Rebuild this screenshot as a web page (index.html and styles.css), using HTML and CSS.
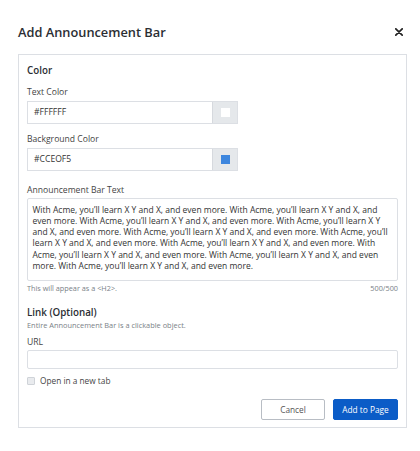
FILE: index.html
```html
<!DOCTYPE html>
<html lang="en">
<head>
<meta charset="utf-8">
<title>Add Announcement Bar</title>
<link rel="stylesheet" href="styles.css">
</head>
<body>
<div class="modal">
  <header class="modal-header">
    <h1 class="modal-title">Add Announcement Bar</h1>
    <button class="close" aria-label="Close">
      <svg width="8" height="8" viewBox="0 0 8 8"><path d="M0.8 0.8 L7.2 7.2 M7.2 0.8 L0.8 7.2" stroke="#222" stroke-width="1.7" stroke-linecap="round"/></svg>
    </button>
  </header>
  <section class="panel">
    <h2 class="section-title">Color</h2>
    <label class="label label-first">Text Color</label>
    <div class="color-input">
      <span class="color-value">#FFFFFF</span>
      <span class="swatch-box"><span class="swatch swatch-white"></span></span>
    </div>
    <label class="label">Background Color</label>
    <div class="color-input">
      <span class="color-value">#CCEOF5</span>
      <span class="swatch-box"><span class="swatch swatch-blue"></span></span>
    </div>
    <label class="label label-text">Announcement Bar Text</label>
    <div class="textarea">With Acme, you’ll learn X Y and X, and even more. With Acme, you’ll learn X Y and X, and even more. With Acme, you’ll learn X Y and X, and even more. With Acme, you’ll learn X Y and X, and even more. With Acme, you’ll learn X Y and X, and even more. With Acme, you’ll learn X Y and X, and even more. With Acme, you’ll learn X Y and X, and even more. With Acme, you’ll learn X Y and X, and even more. With Acme, you’ll learn X Y and X, and even more. With Acme, you’ll learn X Y and X, and even more.</div>
    <div class="hint-row">
      <span>This will appear as a &lt;H2&gt;.</span>
      <span>500/500</span>
    </div>
    <h2 class="section-title link-title">Link (Optional)</h2>
    <p class="sub">Entire Announcement Bar is a clickable object.</p>
    <label class="label label-url">URL</label>
    <div class="url-input"></div>
    <div class="check-row">
      <span class="checkbox"></span>
      <span>Open in a new tab</span>
    </div>
    <div class="actions">
      <button class="btn btn-cancel">Cancel</button>
      <button class="btn btn-primary">Add to Page</button>
    </div>
  </section>
</div>
</body>
</html>
```

FILE: styles.css
```css
* { box-sizing: border-box; }
html, body { margin: 0; padding: 0; background: #fff; }
body { font-family: "Open Sans", "Liberation Sans", sans-serif; color: #333; }

.modal { padding: 0 13px 0 18px; }

.modal-header {
  display: flex;
  align-items: center;
  justify-content: space-between;
  height: 54px;
  padding-top: 10px;
  padding-right: 4px;
}
.modal-title {
  margin: 0;
  font-size: 12.8px;
  font-weight: 600;
  color: #2b2e33;
}
.close {
  border: 0;
  background: none;
  padding: 0;
  width: 8px;
  height: 8px;
  display: flex;
}

.panel {
  border: 1px solid #dcdfe4;
  padding: 8px 8px 7px 8px;
  display: flex;
  flex-direction: column;
}

.section-title {
  margin: 0;
  font-size: 9.8px;
  font-weight: 600;
  color: #2b2e33;
  line-height: 15px;
}
.label {
  display: block;
  font-size: 8.6px;
  color: #444;
  line-height: 12px;
  margin-top: 9px;
  margin-bottom: 3px;
}
.label-first { margin-top: 8px; }
.color-input {
  display: flex;
  width: 211px;
  height: 23px;
  border: 1px solid #dcdfe4;
}
.color-value {
  flex: 1;
  font-size: 8.6px;
  color: #333;
  padding-left: 6px;
  line-height: 21px;
}
.swatch-box {
  width: 25px;
  background: #e5e8eb;
  border-left: 1px solid #d6d9de;
  display: flex;
  align-items: center;
  justify-content: center;
}
.swatch { width: 9px; height: 9px; }
.swatch-white { background: #fff; }
.swatch-blue { background: #3d86de; }

.label-text { margin-top: 13px; margin-bottom: 2px; }

.textarea {
  border: 1px solid #dcdfe4;
  border-radius: 2px;
  padding: 4.5px 1px 3px 4.5px;
  font-size: 8.5px;
  line-height: 11.3px;
  color: #333;
  height: 83px;
}

.hint-row {
  display: flex;
  justify-content: space-between;
  font-size: 7.3px;
  color: #7a7f87;
  line-height: 12px;
  margin-top: 1px;
}

.link-title { margin-top: 11px; }
.sub {
  margin: 0;
  font-size: 7.4px;
  color: #7a7f87;
  line-height: 11px;
}
.label-url { margin-top: 4.5px; margin-bottom: 2px; }
.url-input {
  height: 19px;
  border: 1px solid #dcdfe4;
  border-radius: 2px;
}
.check-row {
  display: flex;
  align-items: center;
  gap: 5px;
  font-size: 8.3px;
  color: #444;
  margin-top: 6px;
  line-height: 12px;
}
.checkbox {
  width: 8px;
  height: 8px;
  border: 1px solid #cfd3d8;
  background: #e9ebee;
  border-radius: 1px;
}
.actions {
  display: flex;
  justify-content: flex-end;
  gap: 8px;
  margin-top: 12.5px;
}
.btn {
  font-family: inherit;
  font-size: 8.3px;
  height: 21px;
  border-radius: 2px;
  padding: 0;
}
.btn-cancel {
  width: 64px;
  background: #fff;
  border: 1px solid #b8bdc4;
  color: #555;
}
.btn-primary {
  width: 65px;
  background: #0b5cc7;
  border: 1px solid #0b5cc7;
  color: #fff;
}
```
